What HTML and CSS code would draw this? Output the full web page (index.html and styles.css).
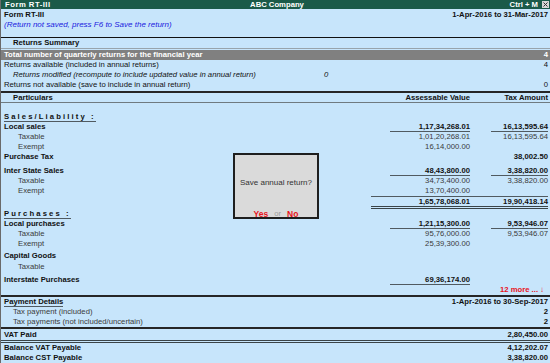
FILE: index.html
```html
<!DOCTYPE html>
<html>
<head>
<meta charset="utf-8">
<link rel="stylesheet" href="styles.css">
</head>
<body>
<div class="app">
  <div class="titlebar">
    <span class="tb-left">Form RT-III</span>
    <span class="tb-center">ABC Company</span>
    <span class="tb-right">Ctrl + M <span class="close"><svg width="7" height="7" viewBox="0 0 7 7"><path d="M1.5 1.5L5.5 5.5M5.5 1.5L1.5 5.5" stroke="#333" stroke-width="1"/></svg></span></span>
  </div>
  <div class="head">
    <div class="head-row"><span class="b">Form RT-III</span><span class="b">1-Apr-2016 to 31-Mar-2017</span></div>
    <div class="head-row blue">(Return not saved, press F6 to Save the return)</div>
  </div>
  <div class="sec-head">Returns Summary</div>
  <div class="gray-row"><span>Total number of quarterly returns for the financial year</span><span>4</span></div>
  <div class="srow"><span>Returns available (included in annual returns)</span><span>4</span></div>
  <div class="srow mod"><span class="mod-label">Returns modified (recompute to include updated value in annual return)</span><span>0</span></div>
  <div class="srow"><span>Returns not available (save to include in annual return)</span><span>0</span></div>

  <div class="col-head r"><span class="ind">Particulars</span><span class="num">Assessable Value</span><span class="num">Tax Amount</span></div>

  <div class="body">
    <div class="r"><span><span class="spaced">Sales/Liability :</span></span><span></span><span></span></div>
    <div class="r b"><span>Local sales</span><span class="num"><span class="ul ul-a">1,17,34,268.01</span></span><span class="num"><span class="ul ul-t">16,13,595.64</span></span></div>
    <div class="r sub"><span class="ind2">Taxable</span><span class="num">1,01,20,268.01</span><span class="num">16,13,595.64</span></div>
    <div class="r sub"><span class="ind2">Exempt</span><span class="num">16,14,000.00</span><span></span></div>
    <div class="r b"><span>Purchase Tax</span><span></span><span class="num">38,002.50</span></div>
    <div class="r b mt4"><span>Inter State Sales</span><span class="num"><span class="ul ul-a">48,43,800.00</span></span><span class="num"><span class="ul ul-t">3,38,820.00</span></span></div>
    <div class="r sub"><span class="ind2">Taxable</span><span class="num">34,73,400.00</span><span class="num">3,38,820.00</span></div>
    <div class="r sub"><span class="ind2">Exempt</span><span class="num">13,70,400.00</span><span></span></div>
    <div class="r b total"><span></span><span class="num tcell">1,65,78,068.01</span><span class="num tcell">19,90,418.14</span></div>
    <div class="r"><span><span class="spaced">Purchases :</span></span><span></span><span></span></div>
    <div class="r b"><span>Local purchases</span><span class="num"><span class="ul ul-a">1,21,15,300.00</span></span><span class="num"><span class="ul ul-t">9,53,946.07</span></span></div>
    <div class="r sub"><span class="ind2">Taxable</span><span class="num">95,76,000.00</span><span class="num">9,53,946.07</span></div>
    <div class="r sub"><span class="ind2">Exempt</span><span class="num">25,39,300.00</span><span></span></div>
    <div class="r b mt2"><span>Capital Goods</span><span></span><span></span></div>
    <div class="r sub mt1"><span class="ind2">Taxable</span><span></span><span></span></div>
    <div class="r b mt3"><span>Interstate Purchases</span><span class="num"><span class="ul ul-a">69,36,174.00</span></span><span></span></div>
    <div class="more-row"><span class="more">12 more ... &#8595;</span></div>
  </div>

  <div class="pay">
    <div class="srow b"><span class="ul-text">Payment Details</span><span>1-Apr-2016 to 30-Sep-2017</span></div>
    <div class="srow sub"><span class="ind">Tax payment (included)</span><span class="b dark">2</span></div>
    <div class="srow sub"><span class="ind">Tax payments (not included/uncertain)</span><span class="b dark">2</span></div>
  </div>
  <div class="vat">
    <div class="srow b"><span>VAT Paid</span><span>2,80,450.00</span></div>
  </div>
  <div class="bal">
    <div class="srow b"><span>Balance VAT Payable</span><span>4,12,202.07</span></div>
    <div class="srow b"><span>Balance CST Payable</span><span>3,38,820.00</span></div>
  </div>

  <div class="dialog">
    <div class="dlg-text">Save annual return?</div>
    <div class="dlg-btns"><span class="red">Yes</span><span class="or">or</span><span class="red">No</span></div>
  </div>
</div>
</body>
</html>
```
FILE: styles.css
```css
* { box-sizing: border-box; }
html, body { margin: 0; padding: 0; }
body {
  width: 550px;
  height: 363px;
  overflow: hidden;
  font-family: "Liberation Sans", Arial, sans-serif;
  font-size: 7.7px;
  color: #111;
  background: #c7e5fb;
}
.app {
  position: relative;
  width: 550px;
  height: 363px;
  border-left: 1px solid #6a6a6a;
  background: #c7e5fb;
}
.b { font-weight: bold; }
.dark { color: #111; }
.titlebar {
  height: 9px;
  background: #1b5a49;
  color: #fff;
  font-weight: bold;
  font-size: 7.7px;
  line-height: 9px;
  display: grid;
  grid-template-columns: 1fr auto 1fr;
  padding: 0 1px 0 4px;
}
.tb-left { letter-spacing: 0.5px; }
.tb-center { text-align: center; }
.tb-right { text-align: right; display: flex; justify-content: flex-end; align-items: center; gap: 4px; }
.close {
  width: 7px; height: 7px;
  background: #d8d8d8;
  display: block;
}
.close svg { display: block; }
.head { height: 28px; padding: 1px 2px 0 3px; }
.head-row { display: flex; justify-content: space-between; line-height: 10px; height: 10px; }
.blue { color: #1a1ae0; font-style: italic; font-size: 8px; }
.sec-head {
  border-top: 1px solid #111;
  border-bottom: 1px solid #98a4ac;
  height: 12px;
  line-height: 10px;
  padding-left: 12px;
  font-weight: bold;
  margin-bottom: 1px;
}
.gray-row {
  background: #808080;
  color: #fff;
  font-weight: bold;
  height: 10px;
  line-height: 10px;
  display: flex;
  justify-content: space-between;
  padding: 0 2px 0 3px;
}
.srow {
  display: flex;
  justify-content: space-between;
  height: 10px;
  line-height: 10px;
  padding: 0 2px 0 3px;
}
.srow.mod { justify-content: flex-start; font-style: italic; }
.mod-label { width: 320px; padding-left: 9px; }
.r {
  display: grid;
  grid-template-columns: 1fr 99px 78px;
  height: 10px;
  line-height: 10px;
  padding: 0 2px 0 3px;
}
.num { text-align: right; }
.col-head {
  margin-top: 1px;
  height: 12px;
  line-height: 9px;
  border-top: 2px solid #262626;
  border-bottom: 1px solid #6f7a80;
  font-weight: bold;
}
.ind { padding-left: 9px; }
.ind2 { padding-left: 14px; }
.sub { color: #3a3a3a; }
.body { padding-top: 9px; }
.spaced {
  display: inline-block;
  font-weight: bold;
  letter-spacing: 2.1px;
  line-height: 9px;
  border-bottom: 1px solid #505a60;
}
.ul {
  display: inline-block;
  line-height: 9px;
  border-bottom: 1px solid #505a60;
}
.ul-a { width: 80px; }
.ul-t { width: 57px; }
.mt4 { margin-top: 4px; }
.mt3 { margin-top: 3px; }
.mt2 { margin-top: 2px; }
.mt1 { margin-top: 1px; }
.r.total { height: 13px; }
.tcell {
  line-height: 9px;
  height: 13px;
  border-top: 1px solid #505a60;
  border-bottom: 3px double #3a4448;
}
.more-row {
  height: 10px;
  line-height: 10px;
  text-align: right;
  padding-right: 6px;
}
.more { color: #e8141c; font-weight: bold; }
.pay { border-top: 2px solid #262626; }
.ul-text { display: inline-block; line-height: 9px; border-bottom: 1px solid #505a60; height: 10px; }
.vat { border-top: 2px solid #262626; padding-top: 1px; }
.bal { border-top: 3px double #3a4448; border-bottom: 1px solid #6f7a80; }
.dialog {
  position: absolute;
  left: 232px;
  top: 153px;
  width: 86px;
  height: 66px;
  background: #dadada;
  border: 2px solid #1e1e1e;
  text-align: center;
}
.dlg-text { color: #333; margin-top: 23px; line-height: 10px; font-size: 8px; }
.dlg-btns { margin-top: 21px; line-height: 10px; display: flex; justify-content: center; gap: 6px; }
.red { color: #e8141c; font-weight: bold; font-size: 8.5px; }
.or { color: #9a9a9a; }
```
